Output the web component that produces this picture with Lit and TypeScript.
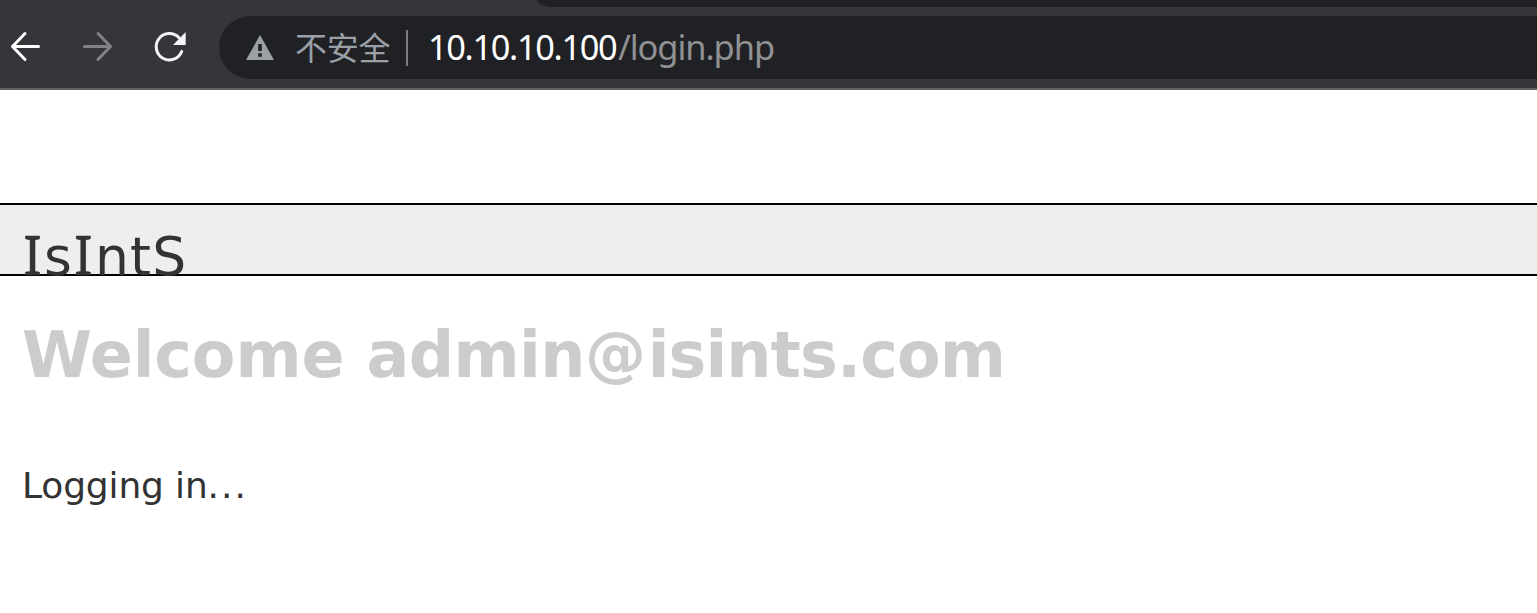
import { LitElement, html, css } from "lit";
import { customElement } from "lit/decorators.js";

@customElement("browser-bar")
class BrowserBar extends LitElement {
  static styles = css`
    :host { display: block; position: relative; height: 88px; background: #35363a; border-bottom: 2px solid #5f5e63; overflow: hidden; }
    .tabs { height: 7px; margin-left: 537px; background: #202124; border-bottom-left-radius: 18px 8px; }
    .row { display: flex; height: 63px; margin-top: 9px; align-items: center; }
    .icons { flex: none; width: 219px; height: 63px; }
    .omnibox { flex: 1; height: 63px; display: flex; align-items: center; background: #202124; border-radius: 32px 0 0 32px; white-space: pre; }
    .warn { flex: none; width: 28px; height: 63px; margin-left: 27px; }
    .label { width: 95px; margin-left: 21px; padding-bottom: 2px; font: 32px/61px "Noto Sans CJK SC", sans-serif; letter-spacing: -0.3px; color: #9aa0a6; }
    .sep { width: 2px; height: 36px; margin-left: 16px; background: #7b7d80; }
    .url { display: flex; margin-left: 20px; padding-bottom: 2px; font: 34.4px/61px "Noto Sans", sans-serif; }
    .host { width: 190px; color: #fff; letter-spacing: -1.36px; }
    .path { color: #8f9193; letter-spacing: -1.05px; }
  `;
  render() {
    return html`
      <div class="tabs"></div>
      <div class="row">
        <svg class="icons" viewBox="0 16 219 63" fill="none" stroke-width="3" stroke-linecap="round" stroke-linejoin="round">
          <path d="M38.5 46.500H13M25 33.500L12.500 46.500L25 59.500" stroke="#fff" />
          <path d="M84.500 46.500H110M98 33.500L110.500 46.500L98 59.500" stroke="#828387" />
          <path d="M181.700 51.500A13.200 13.200 0 1 1 179 37.700" stroke="#f4f5f6" />
          <path d="M185.700 32V45H173Z" fill="#f4f5f6" />
        </svg>
        <div class="omnibox">
          <svg class="warn" viewBox="246 16 28 63">
            <path d="M260 35L274 60H246Z" fill="#9aa0a6" />
            <path d="M258.200 44H261.800V51H258.200ZM258.200 53.300H261.800V56.700H258.200Z" fill="#202124" />
          </svg>
          <span class="label">不安全</span>
          <span class="sep"></span>
          <div class="url"><span class="host">10.10.10.100</span><span class="path">/login.php</span></div>
        </div>
      </div>
    `;
  }
}

@customElement("app-root")
class AppRoot extends LitElement {
  static styles = css`
    :host { display: block; height: 613px; overflow: hidden; background: #fff; font-family: "DejaVu Sans", sans-serif; color: #333; white-space: nowrap; }
    .banner { box-sizing: border-box; height: 73px; margin-top: 113px; padding: 17px 0 0 21px; background: #eee; border: solid #000; border-width: 2px 0; font-size: 53.5px; line-height: 64px; }
    .brand { display: flex; align-items: baseline; }
    .serif-i { width: 23px; font-family: "Noto Sans", sans-serif; font-size: 55px; text-align: center; -webkit-text-stroke: 0.5px #333; }
    .tail { letter-spacing: 1.2px; }
    h1 { margin: 42px 0 0 22px; font-size: 63.5px; line-height: 74px; font-weight: 700; color: #ccc; }
    .greeting { letter-spacing: -0.1px; }
    .user { letter-spacing: -0.6px; }
    .at { font-size: 61px; letter-spacing: 1.8px; line-height: 1; vertical-align: 3px; }
    .domain { letter-spacing: -0.9px; }
    p { margin: 72px 0 0 22px; font-size: 36px; line-height: 44px; letter-spacing: -0.15px; }
    .dots { letter-spacing: 2px; }
  `;
  render() {
    return html`
      <browser-bar></browser-bar>
      <div class="banner">
        <div class="brand"><span class="serif-i">I</span><span>s</span><span class="serif-i">I</span><span class="tail">ntS</span></div>
      </div>
      <h1><span class="greeting">Welcome </span><span class="user">admin</span><span class="at">@</span><span class="domain">isints.com</span></h1>
      <p>Logging in<span class="dots">...</span></p>
    `;
  }
}
